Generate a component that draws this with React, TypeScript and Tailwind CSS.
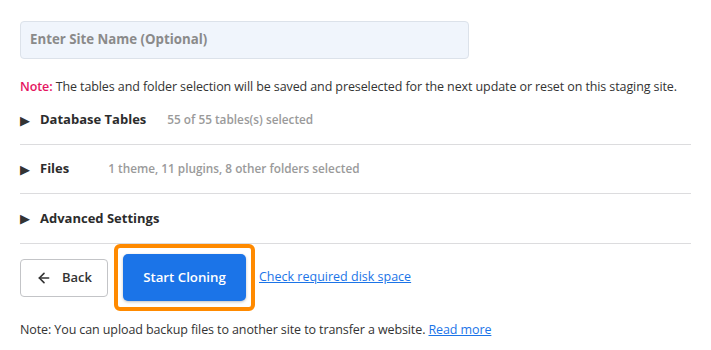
import { ArrowLeft } from 'lucide-react'

function Row({ title, sub, gap, last }: { title: string; sub?: string; gap?: string; last?: boolean }) {
  return (
    <div className={'flex h-[49px] items-center ' + (last ? '' : 'border-b border-[#dcdcde]')}>
      <span className="w-[20px] text-[13px] leading-none text-[#333]">▶</span>
      <span className="text-[13px] font-bold text-[#2c2c2c]">{title}</span>
      {sub && <span className={'text-[11.8px] font-semibold text-[#9a9a9a] ' + gap}>{sub}</span>}
    </div>
  )
}

export default function App() {
  return (
    <div className="bg-white px-5 pt-[21px] font-['Open_Sans',sans-serif] text-[#333]">
      <div className="flex h-[38px] w-[449px] items-center rounded border border-[#dce2ea] bg-[#f0f5fc] px-[9px] text-[13.25px] font-bold text-[#8a8a8a]">
        Enter Site Name (Optional)
      </div>

      <p className="mt-[18px] text-[12.5px] leading-5 tracking-[-0.1px] text-[#333]">
        <span className="font-semibold text-[#e5155f]">Note:</span> The tables and folder selection will be saved and
        preselected for the next update or reset on this staging site.
      </p>

      <div className="-mt-px border-b border-[#dcdcde]">
        <Row title="Database Tables" sub="55 of 55 tables(s) selected" gap="ml-[21px]" />
        <Row title="Files" sub="1 theme, 11 plugins, 8 other folders selected" gap="ml-[39px]" />
        <Row title="Advanced Settings" last />
      </div>

      <div className="flex items-center">
        <button className="flex h-[38px] w-[88px] items-center justify-center gap-[10px] rounded-[4px] border border-[#c3c4c7] bg-white text-[13px] font-semibold text-[#333]">
          <ArrowLeft size={16} strokeWidth={2.4} />
          Back
        </button>
        <div className="ml-[6px] rounded-[6px] border-4 border-[#ff8a00] px-[5px] py-[6px]">
          <button className="h-[47px] w-[123px] rounded-[5px] bg-[#1b74e8] text-[13.25px] font-semibold text-white shadow-[0_1px_3px_rgba(0,0,0,0.25)]">
            Start Cloning
          </button>
        </div>
        <a href="#" className="ml-[4px] text-[12.5px] text-[#1b74e8] underline">
          Check required disk space
        </a>
      </div>

      <p className="mt-[9px] text-[12.5px] leading-5 tracking-[-0.1px] text-[#333]">
        Note: You can upload backup files to another site to transfer a website.{' '}
        <a href="#" className="text-[#1b74e8] underline">
          Read more
        </a>
      </p>
    </div>
  )
}
